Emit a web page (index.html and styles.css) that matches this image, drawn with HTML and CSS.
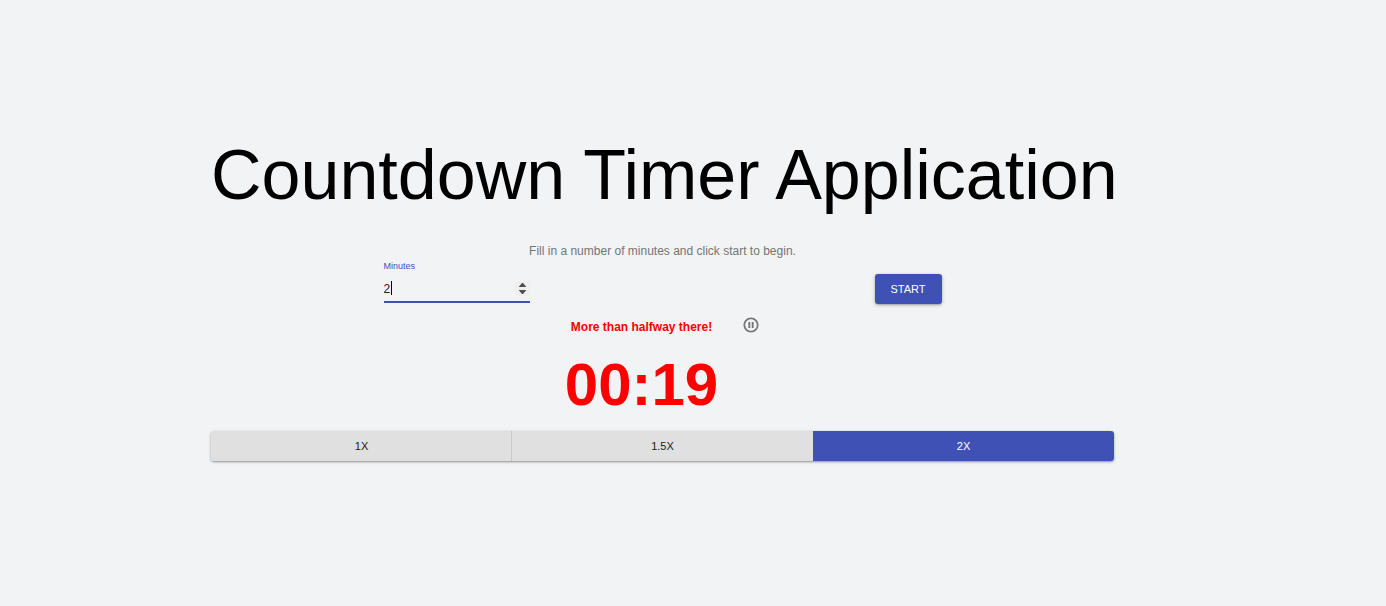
FILE: index.html
```html
<!DOCTYPE html>
<html lang="en">
<head>
<meta charset="utf-8">
<meta name="viewport" content="width=device-width, initial-scale=1">
<title>Countdown Timer Application</title>
<link rel="stylesheet" href="styles.css">
</head>
<body>
<main class="app">
  <h1 class="title">Countdown Timer Application</h1>
  <p class="hint">Fill in a number of minutes and click start to begin.</p>
  <form class="setup">
    <div class="field">
      <label class="field-label" for="minutes">Minutes</label>
      <div class="field-box">
        <input class="field-input" id="minutes" type="number" min="0" value="2" autofocus>
        <span class="caret" aria-hidden="true"></span>
        <svg class="spinner" viewBox="0 0 15 15" aria-hidden="true">
          <rect width="15" height="15" fill="#efefef"/>
          <path d="M4 6V5.500L7 2h1l3 3.500V6zM4 9h7v.5L8 13H7L4 9.500z" fill="#505050"/>
        </svg>
      </div>
    </div>
    <button class="start" type="button">START</button>
  </form>
  <section class="timer">
    <div class="readout">
      <p class="status">More than halfway there!</p>
      <p class="clock">00:19</p>
    </div>
    <button class="pause" type="button" aria-label="Pause">
      <svg class="pause-icon" viewBox="0 0 24 24" aria-hidden="true">
        <path d="M8.500 16h2.500V8H8.500v8zM12 2C6.480 2 2 6.480 2 12s4.480 10 10 10 10-4.480 10-10S17.520 2 12 2zm0 17.700c-4.250 0-7.700-3.450-7.700-7.700S7.750 4.300 12 4.300s7.700 3.450 7.700 7.700-3.450 7.700-7.700 7.700zM13 16h2.500V8H13v8z"/>
      </svg>
    </button>
  </section>
  <div class="speeds">
    <button class="speed" type="button">1X</button>
    <button class="speed" type="button">1.5X</button>
    <button class="speed speed-active" type="button">2X</button>
  </div>
</main>
</body>
</html>
```
FILE: styles.css
```css
* {
  box-sizing: border-box;
}

body {
  margin: 0;
  background: #f1f3f5;
  color: #000;
  font-family: "Liberation Sans", Arial, sans-serif;
  font-size: 12px;
}

button,
input {
  font-family: inherit;
}

.app {
  padding: 133px 272px 144px 211px;
}

.title {
  margin: 0;
  font-size: 70px;
  line-height: 84px;
  font-weight: 400;
  text-align: center;
  white-space: nowrap;
}

.hint {
  margin: 25px 0 0;
  line-height: 18px;
  text-align: center;
  color: #757575;
}

.setup {
  display: flex;
  justify-content: space-around;
  align-items: flex-end;
}

.field {
  width: 146px;
}

.field-label {
  display: block;
  font-size: 9px;
  line-height: 12px;
  color: #3f51b5;
}

.field-box {
  position: relative;
  margin-top: 4px;
  border-bottom: 2px solid #3f51b5;
}

.field-input {
  display: block;
  width: 100%;
  height: 25px;
  padding: 0;
  border: 0;
  outline: 0;
  background: none;
  font-size: 12px;
  color: #212121;
  caret-color: transparent;
  appearance: textfield;
}

.caret {
  position: absolute;
  left: 7px;
  top: 5px;
  width: 1px;
  height: 14px;
  background: #000;
}

.spinner {
  position: absolute;
  right: 0;
  top: 5px;
  width: 15px;
  height: 15px;
}

.start {
  width: 67px;
  height: 30px;
  margin-bottom: -1px;
  padding: 0;
  border: 0;
  border-radius: 3px;
  background: #3f51b5;
  color: #fff;
  font-size: 11px;
  box-shadow: 0 2px 1px -2px rgba(0, 0, 0, 0.2), 0 1px 2px rgba(0, 0, 0, 0.2), 0 1px 4px rgba(0, 0, 0, 0.2);
}

.timer {
  display: flex;
  justify-content: center;
  align-items: flex-start;
  gap: 6px;
  margin-top: 4px;
}

.readout {
  width: 171px;
  padding-top: 11px;
  text-align: center;
  color: #f00;
  font-weight: 700;
}

.status {
  margin: 0;
  line-height: 18px;
}

.clock {
  margin: 13px 0 0;
  font-size: 60px;
  line-height: 72px;
}

.pause {
  padding: 9px;
  border: 0;
  border-radius: 50%;
  background: none;
}

.pause-icon {
  display: block;
  width: 18px;
  height: 18px;
  fill: #757575;
}

.speeds {
  display: grid;
  grid-template-columns: repeat(3, 1fr);
  margin-top: 10px;
  border-radius: 3px;
  box-shadow: 0 2px 1px -2px rgba(0, 0, 0, 0.2), 0 1px 2px rgba(0, 0, 0, 0.3), 0 1px 4px rgba(0, 0, 0, 0.12);
}

.speed {
  height: 30px;
  padding: 0;
  border: 0;
  background: #e0e0e0;
  color: #212121;
  font-size: 11px;
}

.speed:first-child {
  border-radius: 3px 0 0 3px;
  box-shadow: inset -1px 0 #cacaca;
}

.speed-active {
  border-radius: 0 3px 3px 0;
  background: #3f51b5;
  color: #fff;
}
```
